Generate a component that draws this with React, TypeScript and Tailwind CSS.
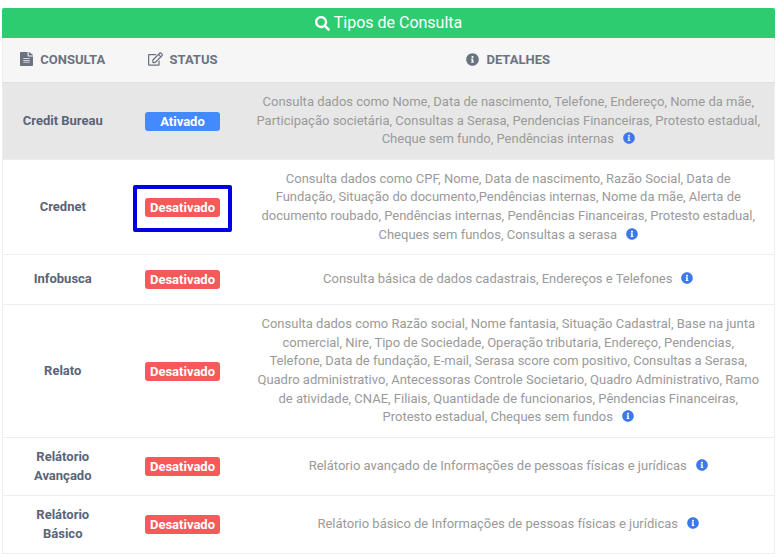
import { FaSearch, FaFileAlt, FaRegEdit, FaInfoCircle } from 'react-icons/fa'

interface Consulta {
  nome: string[]
  ativo: boolean
  detalhes: string[]
  minHeight: string
  marcado?: boolean
  destaque?: boolean
}

const consultas: Consulta[] = [
  {
    nome: ['Credit Bureau'],
    ativo: true,
    destaque: true,
    minHeight: 'h-[77px]',
    detalhes: [
      'Consulta dados como Nome, Data de nascimento, Telefone, Endereço, Nome da mãe,',
      'Participação societária, Consultas a Serasa, Pendencias Financeiras, Protesto estadual,',
      'Cheque sem fundo, Pendências internas',
    ],
  },
  {
    nome: ['Crednet'],
    ativo: false,
    marcado: true,
    minHeight: 'h-[95px]',
    detalhes: [
      'Consulta dados como CPF, Nome, Data de nascimento, Razão Social, Data de',
      'Fundação, Situação do documento,Pendências internas, Nome da mãe, Alerta de',
      'documento roubado, Pendências internas, Pendências Financeiras, Protesto estadual,',
      'Cheques sem fundos, Consultas a serasa',
    ],
  },
  {
    nome: ['Infobusca'],
    ativo: false,
    minHeight: 'h-[50px]',
    detalhes: ['Consulta básica de dados cadastrais, Endereços e Telefones'],
  },
  {
    nome: ['Relato'],
    ativo: false,
    minHeight: 'h-[133px]',
    detalhes: [
      'Consulta dados como Razão social, Nome fantasia, Situação Cadastral, Base na junta',
      'comercial, Nire, Tipo de Sociedade, Operação tributaria, Endereço, Pendencias,',
      'Telefone, Data de fundação, E-mail, Serasa score com positivo, Consultas a Serasa,',
      'Quadro administrativo, Antecessoras Controle Societario, Quadro Administrativo, Ramo',
      'de atividade, CNAE, Filiais, Quantidade de funcionarios, Pêndencias Financeiras,',
      'Protesto estadual, Cheques sem fundos',
    ],
  },
  {
    nome: ['Relátorio', 'Avançado'],
    ativo: false,
    minHeight: 'h-[58px]',
    detalhes: ['Relátorio avançado de Informações de pessoas físicas e jurídicas'],
  },
  {
    nome: ['Relátorio', 'Básico'],
    ativo: false,
    minHeight: 'h-[58px]',
    detalhes: ['Relátorio básico de Informações de pessoas físicas e jurídicas'],
  },
]

function StatusBadge({ ativo }: { ativo: boolean }) {
  return (
    <span
      className={`inline-flex h-[19px] w-[75px] items-center justify-center rounded-[3px] text-[13px] font-bold leading-none text-white ${
        ativo ? 'bg-[#448aff]' : 'bg-[#f55a5a]'
      }`}
    >
      {ativo ? 'Ativado' : 'Desativado'}
    </span>
  )
}

export default function App() {
  return (
    <div className="min-h-[554px] bg-white pl-[2px] pr-[4px] pt-2 font-['Roboto',sans-serif]">
      {/* Titulo */}
      <div className="flex h-[30px] items-center justify-center gap-[4px] rounded-t-[2px] bg-[#2ecc71] text-base text-white">
        <FaSearch size={15} />
        Tipos de Consulta
      </div>

      <table className="w-full table-fixed border-collapse border-x border-[#eeeeee]">
        <colgroup>
          <col className="w-[120px]" />
          <col className="w-[120px]" />
          <col />
        </colgroup>
        <thead>
          <tr className="h-[44px] border-b border-[#e0e0e0] bg-[#f6f6f6] text-[13px] font-bold uppercase text-[#6b7280]">
            <th className="p-0 pt-[2px] font-bold">
              <span className="inline-flex items-center gap-[7px]">
                <FaFileAlt className="h-[14px] w-[13px]" preserveAspectRatio="none" />
                Consulta
              </span>
            </th>
            <th className="p-0 pt-[2px] font-bold">
              <span className="inline-flex items-center gap-[7px]">
                <FaRegEdit className="h-[14px] w-[15px]" />
                Status
              </span>
            </th>
            <th className="p-0 pt-[2px] font-bold">
              <span className="inline-flex items-center gap-[7px]">
                <FaInfoCircle size={13} />
                Detalhes
              </span>
            </th>
          </tr>
        </thead>
        <tbody>
          {consultas.map(c => (
            <tr
              key={c.nome.join(' ')}
              className={`${c.minHeight} border-b border-[#eeeeee] ${c.destaque ? 'bg-[#e7e7e7]' : 'bg-white'}`}
            >
              <td className="p-0 pt-[1px] text-center text-[13px] font-bold leading-[18.5px] text-[#5a6478]">
                {c.nome.map(parte => (
                  <div key={parte}>{parte}</div>
                ))}
              </td>
              <td className="p-0 text-center">
                <div className="relative inline-flex align-middle">
                  <StatusBadge ativo={c.ativo} />
                  {c.marcado && (
                    <div className="absolute -bottom-[15px] -left-[12px] -right-[12px] -top-[13px] rounded-[2px] border-[4px] border-[#0000e0]" />
                  )}
                </div>
              </td>
              <td className="p-0 pt-[1px] text-center text-[13px] leading-[18.7px] text-[#9a9a9a]">
                {c.detalhes.map((linha, i) => (
                  <div key={linha} className="whitespace-nowrap">
                    {linha}
                    {i === c.detalhes.length - 1 && (
                      <FaInfoCircle size={12} className="ml-[9px] inline-block align-[-1px] text-[#3f78ea]" />
                    )}
                  </div>
                ))}
              </td>
            </tr>
          ))}
        </tbody>
      </table>
    </div>
  )
}
